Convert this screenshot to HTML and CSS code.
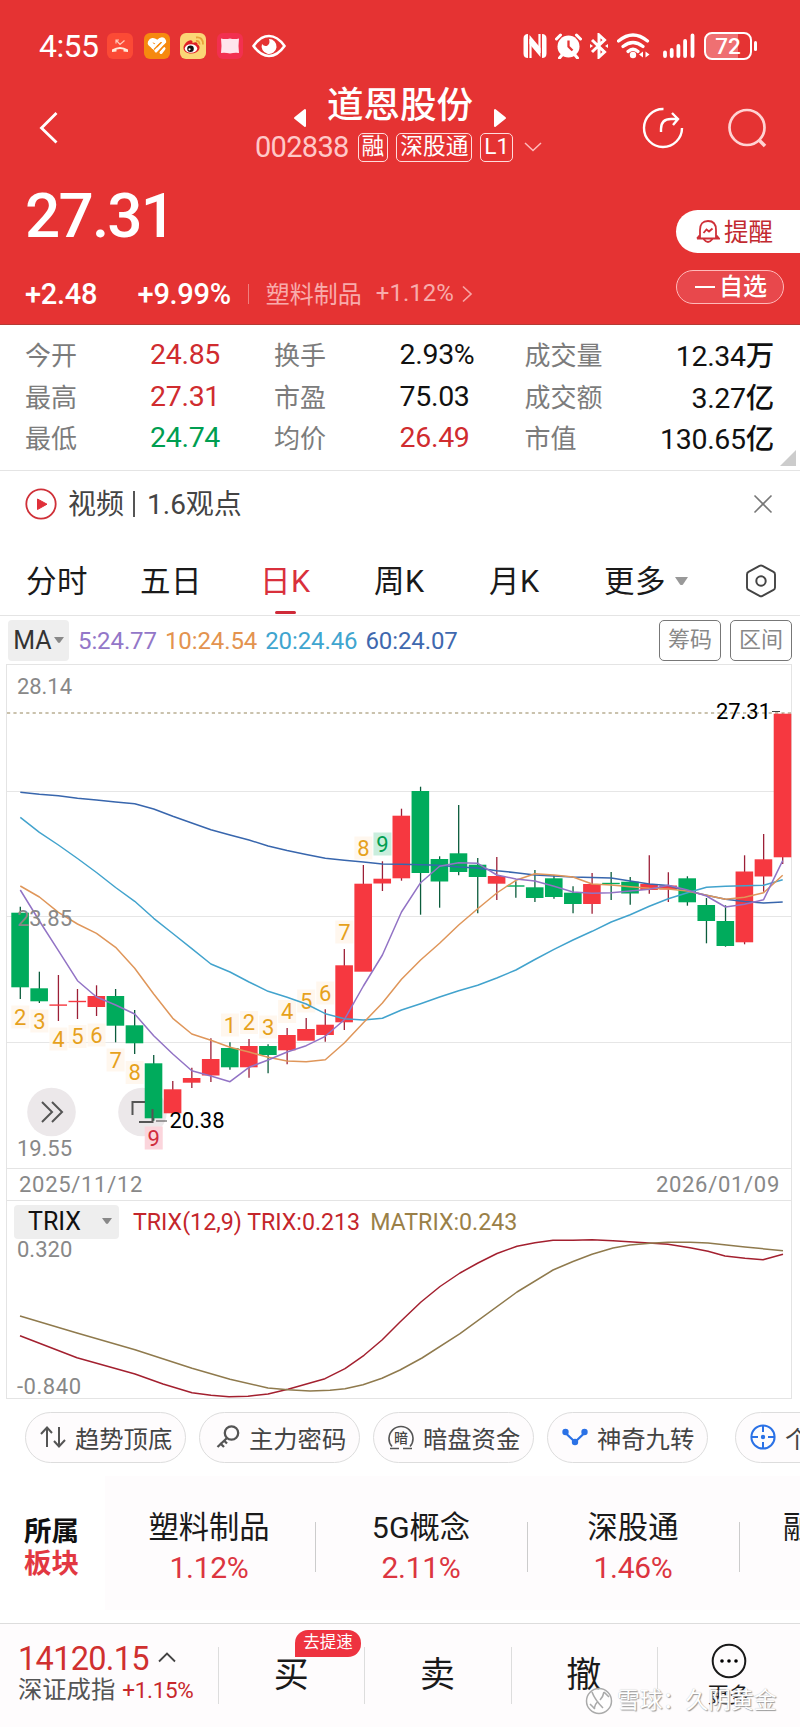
FILE: index.html
```
<!DOCTYPE html>
<html lang="zh-CN">
<head>
	<meta charset="utf-8">
	<title>道恩股份 002838</title>
	<meta name="viewport" content="width=device-width, initial-scale=1">
	<link rel="stylesheet" href="styles.css">
</head>
<body>
	<header class="top">
		<div class="status">
			<span class="time">4:55</span>
			<div class="apps">
				<svg width="26" height="26" viewBox="0 0 26 26"><rect width="26" height="26" rx="6" fill="#fb4a35"/><path d="M5 19v-2.500q8-5 16 0V19l-4.500-.5v-2q-3.500-1-7 0v2z" fill="#ffe9d8"/><path d="M9.500 7.500l3.500 4 4.500-4M9 10.500V7h3" fill="none" stroke="#ffc9b8" stroke-width="1.200"/></svg>
				<svg width="26" height="26" viewBox="0 0 26 26"><rect width="26" height="26" rx="6" fill="#f6890f"/><path d="M6 10.500l5.500 5M6 9.500q2-4 6-1M14.500 8.500q4-4 5.500 0" fill="none" stroke="#fff" stroke-width="4.500" stroke-linecap="round"/><path d="M9 14.500l7-6.500M12 18l8-8.500M17 19.500l3-4" stroke="#fff" stroke-width="3" stroke-linecap="round"/><path d="M10 16.500l7-7M14 19.500l6.500-7" stroke="#f6890f" stroke-width="1.200"/></svg>
				<svg width="26" height="26" viewBox="0 0 26 26"><rect width="26" height="26" rx="6" fill="#fbd676"/><path d="M3.500 15c0-4 5-8.500 8-7.500 1.500.5 1 2 1 2.500 3-1.500 5.500-1 5 1.500 4 1.500 2.500 9-6.500 9-4.500 0-7.500-2.500-7.500-5.500z" fill="#df1f26"/><ellipse cx="11" cy="15.500" rx="6.200" ry="4.300" fill="#fff"/><circle cx="10.500" cy="15.700" r="3.300" fill="#111"/><circle cx="9.500" cy="16.300" r="1.100" fill="#fff"/><path d="M16 4.500q7-1 7 7M16 8q3.500-.5 3.500 3.500" fill="none" stroke="#e9a03a" stroke-width="1.800"/></svg>
				<svg width="26" height="26" viewBox="0 0 26 26"><rect width="26" height="26" rx="6" fill="#f2304f"/><path d="M4 5.500q4.500 1 9 0 4.500 1 9 0l-.5 7.500.5 7q-4.500-.5-9 .5-4.500-1-9-.5l.5-7z" fill="#ffe5ec"/></svg>
				<svg class="eye" width="34" height="24" viewBox="0 0 34 24"><path d="M1.500 12Q8.500 2 17 2t15.500 10Q25.500 22 17 22T1.500 12z" fill="none" stroke="#fff" stroke-width="2.600"/><path d="M17 5a7.500 7.500 0 1 1-7 5q2.500 3 5.500 1.500Q18.500 9.500 17 5z" fill="#fff"/></svg>
			</div>
			<div class="signals">
				<svg width="24" height="26" viewBox="0 0 24 26"><path d="M5 1Q.5 1 .5 5.500v15Q.5 25 5 25zM19 1q4.500 0 4.500 4.500v15Q23.500 25 19 25z" fill="#fff"/><path d="M7.500 25V6M16.500 1v19" stroke="#fff" stroke-width="2.200"/><path d="M6.500 2l11 13v9L6.500 11z" fill="#fff"/></svg>
				<svg width="27" height="26" viewBox="0 0 27 26"><circle cx="13.500" cy="13.500" r="11" fill="#fff"/><path d="M1.500 6l4-4M25.500 6l-4-4M7 22l-2.500 3M20 22l2.500 3" stroke="#fff" stroke-width="3" stroke-linecap="round"/><path d="M13.500 7.500v6l4 4" fill="none" stroke="#e53333" stroke-width="2.300"/></svg>
				<svg width="18" height="26" viewBox="0 0 18 26"><path d="M2 7l12.500 12-5.500 5V2l5.500 5L2 19" fill="none" stroke="#fff" stroke-width="3"/><path d="M0 11l3 2-3 2zM18 11l-3 2 3 2z" fill="#fff"/></svg>
				<svg width="34" height="26" viewBox="0 0 34 26"><path d="M1.500 8q14.500-12 29 0M6 13.500q10-8 20 0M11 18.500q5-4.500 10 0" fill="none" stroke="#fff" stroke-width="3.200" stroke-linecap="round"/><circle cx="16" cy="22" r="3.200" fill="#fff"/><path d="M22 21.500l4-3v6zM32.500 21.500l-4-3v6z" fill="#fff"/></svg>
				<svg class="bars" width="32" height="26" viewBox="0 0 32 26"><path d="M2 19.500V23M8.700 17v6M15.400 13v10M22.100 8v15M29.500 2.500V23" stroke="#fff" stroke-width="3.800" stroke-linecap="round"/></svg>
				<span class="battery">72</span>
			</div>
		</div>

		<div class="titlebar">
			<svg class="back" width="20" height="34" viewBox="0 0 20 34"><path d="M17.500 2L2.500 17l15 14.500" fill="none" stroke="#fff" stroke-width="2.800"/></svg>
			<div class="stock">
				<div class="stock-name">
					<svg width="14" height="20" viewBox="0 0 14 20"><path d="M12 2v16L2 10z" fill="#fff" stroke="#fff" stroke-width="2" stroke-linejoin="round"/></svg>
					<h1>道恩股份</h1>
					<svg width="14" height="20" viewBox="0 0 14 20"><path d="M2 2v16l10-8z" fill="#fff" stroke="#fff" stroke-width="2" stroke-linejoin="round"/></svg>
				</div>
				<div class="stock-code">
					<span class="code">002838</span>
					<span class="tag">融</span>
					<span class="tag">深股通</span>
					<span class="tag">L1</span>
					<svg width="18" height="10" viewBox="0 0 18 10"><path d="M1 1l8 7.500L17 1" fill="none" stroke="#fbb" stroke-width="1.500"/></svg>
				</div>
			</div>
			<svg class="share" width="42" height="42" viewBox="0 0 42 42"><path d="M21.500 2A19 19 0 1 0 40 21" fill="none" stroke="#fff" stroke-width="2.400"/><path d="M19 25v-3q0-10 10-10h6M30 6l6 6-5 6" fill="none" stroke="#fff" stroke-width="2.400"/></svg>
			<svg width="40" height="40" viewBox="0 0 40 40"><circle cx="20" cy="19.500" r="17.500" fill="none" stroke="#ffd3d3" stroke-width="2.700"/><path d="M31.500 31.500l6.500 6.500" stroke="#ffd3d3" stroke-width="3.500"/></svg>
		</div>

		<div class="price">
			<div>
				<div class="last">27.31</div>
				<div class="change">
					<b>+2.48</b>
					<b>+9.99%</b>
					<i></i>
					<span>塑料制品</span>
					<em>+1.12%</em>
					<svg width="11" height="18" viewBox="0 0 11 18"><path d="M1 1.500L9 9l-8 7.500" fill="none" stroke="#f8a5a5" stroke-width="1.700"/></svg>
				</div>
			</div>
			<div class="actions">
				<a class="remind">
					<svg width="24" height="25" viewBox="0 0 24 25"><path d="M4 19V11q0-9 8-9t8 9v8M1 19.500h22l-2.500-3M1 19.500l2.500-3M7.500 20q4.500 6 9 0M7.500 14l3-3.500 2.500 2 3.500-3" fill="none" stroke="#cf3038" stroke-width="1.800"/></svg>
					<span>提醒</span>
				</a>
				<a class="watch"><i></i>自选</a>
			</div>
		</div>
	</header>

	<section class="quotes">
		<span>今开</span><b class="up">24.85</b><span>换手</span><b>2.93%</b><span>成交量</span><b>12.34万</b>
		<span>最高</span><b class="up">27.31</b><span>市盈</span><b>75.03</b><span>成交额</span><b>3.27亿</b>
		<span>最低</span><b class="down">24.74</b><span>均价</span><b class="up">26.49</b><span>市值</span><b>130.65亿</b>
	</section>

	<section class="video">
		<svg width="32" height="32" viewBox="0 0 32 32"><circle cx="16" cy="16" r="14.700" fill="none" stroke="#cf3038" stroke-width="1.800"/><path d="M12.500 11v10.500L22 16.200z" fill="#e0303a" stroke="#e0303a" stroke-linejoin="round"/></svg>
		<p>视频<i></i>1.6观点</p>
		<svg width="20" height="20" viewBox="0 0 20 20"><path d="M1.500 1.500l17 17M18.500 1.500l-17 17" stroke="#777" stroke-width="1.600"/></svg>
	</section>

	<nav class="tabs">
		<a>分时</a>
		<a>五日</a>
		<a class="active">日K</a>
		<a>周K</a>
		<a>月K</a>
		<a>更多<svg width="15" height="10" viewBox="0 0 15 10"><path d="M1 1h13L9 8.500q-1.500 1-3 0z" fill="#999"/></svg></a>
		<svg width="32" height="34" viewBox="0 0 32 34"><path d="M14.500 1.900q1.500-.8 3 0l11 6q1.500.8 1.500 2.500v13q0 1.700-1.500 2.500l-11 6q-1.500.8-3 0l-11-6Q2 25.100 2 23.400v-13q0-1.700 1.500-2.500z" fill="none" stroke="#444" stroke-width="1.900"/><circle cx="16" cy="17" r="4.700" fill="none" stroke="#444" stroke-width="2"/></svg>
	</nav>

	<section class="ma">
		<a class="ma-select">MA<svg width="10" height="7" viewBox="0 0 10 7"><path d="M0 0h10L6 5.500q-1 .8-2 0z" fill="#888"/></svg></a>
		<span class="ma5">5:24.77</span>
		<span class="ma10">10:24.54</span>
		<span class="ma20">20:24.46</span>
		<span class="ma60">60:24.07</span>
		<a class="outline">筹码</a>
		<a class="outline">区间</a>
	</section>

	<section class="chart">
		<svg id="kline" width="784" height="503" viewBox="7 665 784 503"></svg>
		<div class="dates"><span>2025/11/12</span><span>2026/01/09</span></div>
		<div class="trix-head">
			<a>TRIX<svg width="10" height="7" viewBox="0 0 10 7"><path d="M0 0h10L6 5.500q-1 .8-2 0z" fill="#888"/></svg></a>
			<span class="trix">TRIX(12,9) TRIX:0.213</span>
			<span class="matrix">MATRIX:0.243</span>
		</div>
		<svg id="trix" width="784" height="157" viewBox="7 1241 784 157"></svg>
	</section>

	<section class="chips">
		<a><svg width="26" height="22" viewBox="0 0 26 22"><path d="M7 21V2M1 8l6-6.500L12 7M19 1v19M14 15l5 5.500 6-6.500" fill="none" stroke="#555" stroke-width="2"/></svg>趋势顶底</a>
		<a><svg width="24" height="24" viewBox="0 0 24 24"><circle cx="15.500" cy="8" r="6.700" fill="none" stroke="#555" stroke-width="2.300"/><path d="M11 13L1.500 22M4 18l4 4M8 15.500l3 3" fill="none" stroke="#555" stroke-width="2.300"/></svg>主力密码</a>
		<a><svg width="26" height="26" viewBox="0 0 26 26"><path d="M4 22.500A12 12 0 1 1 22 22.500M2 24.500h9M15 24.500h9" fill="none" stroke="#555" stroke-width="1.600"/><text x="13" y="18.500" text-anchor="middle" font-size="14" font-weight="500" fill="#444">暗</text></svg>暗盘资金</a>
		<a><svg width="26" height="18" viewBox="0 0 26 18"><path d="M3.500 5L13 14l9.500-9" fill="none" stroke="#2b72e6" stroke-width="2.300"/><circle cx="3.500" cy="4" r="3.200" fill="#2b72e6"/><circle cx="22.500" cy="4" r="3.200" fill="#2b72e6"/><circle cx="13" cy="14" r="3.200" fill="#2b72e6"/></svg>神奇九转</a>
		<i></i>
		<a><svg width="26" height="26" viewBox="0 0 26 26"><circle cx="13" cy="13" r="11.600" fill="none" stroke="#2b72e6" stroke-width="2"/><path d="M13 1v7M13 18v7M1 13h7M18 13h7" stroke="#2b72e6" stroke-width="2"/><circle cx="13" cy="13" r="2.200" fill="#2b72e6"/></svg>个</a>
	</section>

	<section class="sectors">
		<h2>所属<span>板块</span></h2>
		<div class="sector-list">
			<div>塑料制品<b>1.12%</b></div>
			<div>5G概念<b>2.11%</b></div>
			<div>深股通<b>1.46%</b></div>
			<div class="next">融</div>
		</div>
	</section>

	<footer class="bottom">
		<div class="index">
			<p class="index-value">14120.15<svg width="20" height="12" viewBox="0 0 20 12"><path d="M2 10.500l8-8 8 8" fill="none" stroke="#444" stroke-width="1.800"/></svg></p>
			<p class="index-name">深证成指<b>+1.15%</b></p>
		</div>
		<a>买<span class="badge">去提速</span></a>
		<a>卖</a>
		<a>撤</a>
		<a class="more">
			<svg width="36" height="36" viewBox="0 0 36 36"><circle cx="18" cy="18" r="16.300" fill="none" stroke="#1a1a1a" stroke-width="2"/><circle cx="11" cy="18" r="1.800"/><circle cx="18" cy="18" r="1.800"/><circle cx="25" cy="18" r="1.800"/></svg>
			更多
		</a>
		<div class="watermark"><svg width="28" height="28" viewBox="0 0 28 28"><circle cx="14" cy="14" r="12.500" fill="#fff" fill-opacity=".6" stroke="#aaa" stroke-width="1.500"/><path d="M7 5q3 8 11 16M19 5q-1 5-4 8M9 22q1-5 4-8M19 5l5 5M5 17l5 5" fill="none" stroke="#aaa" stroke-width="1.600"/></svg>雪球：久阴黄金</div>
	</footer>

	<script src="chart.js"></script>
</body>
</html>
```
FILE: styles.css
```
* {
	box-sizing: border-box;
}
body {
	margin: 0;
	width: 800px;
	height: 1727px;
	overflow: hidden;
	background: #fff;
	color: #1a1a1a;
	font-family: Roboto, "Noto Sans CJK SC", sans-serif;
}
h1, h2, p {
	margin: 0;
}
svg {
	display: block;
	flex: none;
}
b, i, em {
	font-weight: 400;
	font-style: normal;
}

/* red header */
.top {
	height: 325px;
	background: #e53333;
	border-bottom: 1px solid #b53a34;
	color: #fff;
	white-space: nowrap;
}
.status {
	height: 80px;
	padding: 12px 43px 0 39px;
	display: flex;
	align-items: center;
}
.time {
	width: 68px;
	font-size: 32px;
	letter-spacing: -0.6px;
}
.apps {
	display: flex;
	align-items: center;
	gap: 10.700px;
}
.eye {
	margin-left: -2px;
}
.signals {
	margin-left: auto;
	display: flex;
	align-items: center;
	gap: 8.200px;
}
.bars {
	margin-left: 4px;
}
.battery {
	position: relative;
	width: 48px;
	height: 28px;
	margin: 0 5px 0 1px;
	border: 2px solid #fff;
	border-radius: 8px;
	background: linear-gradient(90deg, #ef7072 72%, #e53333 72%);
	font-size: 22.500px;
	font-weight: 500;
	line-height: 25px;
	text-align: center;
}
.battery::after {
	content: "";
	position: absolute;
	right: -7px;
	top: 7px;
	width: 3px;
	height: 10px;
	border-radius: 2px;
	background: #fff;
}
.titlebar {
	height: 96px;
	padding: 0 33px 0 39px;
	display: flex;
	align-items: center;
}
.stock {
	flex: none;
	width: 290px;
	margin: -8px 97px 0 196px;
}
.stock-name {
	height: 44px;
	padding-left: 38px;
	display: flex;
	align-items: center;
	gap: 20px;
}
.stock-name svg {
	margin-top: 23px;
}
.stock-name h1 {
	font-size: 36.500px;
	font-weight: 500;
	line-height: 44px;
}
.stock-code {
	height: 34px;
	margin-top: 2px;
	display: flex;
	align-items: center;
	gap: 8px;
}
.code {
	margin-right: 1px;
	color: #ffc8c8;
	font-size: 29px;
	letter-spacing: -0.7px;
}
.tag {
	height: 29px;
	padding: 0 3px;
	border: 1.300px solid #ffdcdc;
	border-radius: 5px;
	font-size: 22.700px;
	line-height: 25px;
}
.stock-code svg {
	margin-left: 3px;
}
.share {
	margin-right: 43px;
}
.price {
	display: flex;
	justify-content: space-between;
	padding-left: 25px;
}
.last {
	height: 80px;
	font-size: 62px;
	font-weight: 500;
	line-height: 80px;
	letter-spacing: -1.800px;
}
.change {
	height: 32px;
	margin-top: 22px;
	display: flex;
	align-items: center;
	color: #f8abab;
	font-size: 24px;
}
.change b {
	color: #fff;
	font-size: 29px;
	font-weight: 500;
	letter-spacing: -0.3px;
	margin-right: 40.500px;
}
.change b + b {
	margin-right: 0;
}
.change i {
	width: 1px;
	height: 20px;
	margin: 0 17px;
	background: #f07f7f;
}
.change span {
	margin-top: -4px;
}
.change em {
	margin: -2px 8px 0 14px;
}
.actions {
	padding-top: 34px;
}
.remind {
	width: 124px;
	height: 43px;
	padding-left: 20px;
	display: flex;
	align-items: center;
	gap: 4px;
	border-radius: 22px 0 0 22px;
	background: #fff;
	color: #c22a30;
	font-size: 24.500px;
}
.remind span {
	margin-top: -2px;
}
.watch {
	width: 108px;
	height: 34px;
	margin-top: 17px;
	padding-left: 18px;
	display: flex;
	align-items: center;
	gap: 4px;
	border: 1px solid #ffb9b9;
	border-radius: 17px;
	background: #e8484c;
	font-size: 24px;
	font-weight: 500;
	line-height: 30px;
}
.watch i {
	width: 20px;
	height: 2px;
	background: #fff;
}

/* quotes */
.quotes {
	position: relative;
	height: 146px;
	padding: 9px 26px 0 25px;
	display: grid;
	grid-template-columns: 125px 124px 125.500px 125px 95px 1fr;
	grid-auto-rows: 41.600px;
	align-items: center;
	border-bottom: 1px solid #e4e4e4;
	color: #7c7c7c;
	font-size: 26px;
}
.quotes span {
	margin-top: -2px;
}
.quotes b {
	color: #111;
	font-size: 28.500px;
	font-weight: 450;
	letter-spacing: -0.3px;
	white-space: nowrap;
}
.quotes b:nth-child(6n) {
	margin-top: -2px;
	text-align: right;
}
.quotes .up {
	color: #d02c2f;
}
.quotes .down {
	color: #009e51;
}
.quotes::after {
	content: "";
	position: absolute;
	right: 4px;
	bottom: 4px;
	border: 8px solid;
	border-color: transparent #ccc #ccc transparent;
}

.video {
	height: 66px;
	padding: 0 27px 0 25px;
	display: flex;
	align-items: center;
}
.video p {
	flex: 1;
	margin: -4px 0 0 11px;
	color: #444;
	font-size: 28px;
}
.video i {
	display: inline-block;
	width: 2px;
	height: 26px;
	margin: 0 12px 0 9px;
	background: #555;
	vertical-align: -3px;
}

/* period tabs */
.tabs {
	height: 79px;
	padding: 9px 23px 0 26px;
	display: grid;
	grid-template-columns: 114px 120px 114px 115px 115px 141px 32px;
	align-items: center;
	border-bottom: 1px solid #e4e4e4;
	font-size: 30.500px;
	letter-spacing: 0.5px;
}
.tabs a {
	position: relative;
	top: -2px;
	display: flex;
	align-items: center;
	gap: 8px;
}
.tabs a svg {
	margin-top: 5px;
}
.tabs .active {
	color: #d9303c;
}
.tabs .active::after {
	content: "";
	position: absolute;
	left: 15px;
	bottom: -13px;
	width: 21px;
	height: 3px;
	border-radius: 2px;
	background: #cf2a38;
}

/* MA legend */
.ma {
	height: 48px;
	padding: 0 8px;
	display: flex;
	align-items: center;
	font-size: 24px;
}
.ma span {
	margin: 2px 8px 0 0;
	letter-spacing: -0.1px;
}
.ma-select {
	width: 61px;
	height: 41px;
	margin-right: 9px;
	display: flex;
	align-items: center;
	justify-content: center;
	gap: 2px;
	border-radius: 4px;
	background: #eee;
	color: #333;
	font-size: 25px;
}
.ma5 { color: #9377c8; }
.ma10 { color: #e3934f; }
.ma20 { color: #3fa5cf; }
.ma60 { color: #3f68ae; }
.outline {
	width: 62px;
	height: 41px;
	margin-left: 9px;
	border: 1px solid #777;
	border-radius: 5px;
	color: #888;
	font-size: 22px;
	line-height: 38px;
	text-align: center;
}
.ma60 + .outline {
	margin-left: auto;
}

/* chart */
.chart {
	width: 786px;
	height: 735px;
	margin-left: 6px;
	border: 1px solid #e4e4e4;
}
.chart svg {
	overflow: visible;
}
.dates {
	height: 33px;
	padding: 0 11px 0 12px;
	display: flex;
	justify-content: space-between;
	align-items: center;
	border: solid #e4e4e4;
	border-width: 1px 0;
	color: #888;
	font-size: 22px;
	letter-spacing: 0.7px;
}
.trix-head {
	height: 40px;
	padding: 1px 0 0 7px;
	display: flex;
	align-items: center;
	font-size: 23.200px;
}
.trix-head a {
	width: 105px;
	height: 34px;
	margin-right: 14px;
	padding: 0 7px 0 14px;
	display: flex;
	align-items: center;
	justify-content: space-between;
	border-radius: 4px;
	background: #eee;
	color: #111;
	font-size: 25px;
}
.trix-head span {
	padding-top: 1px;
}
.trix {
	margin-right: 10px;
	color: #c4252b;
}
.matrix {
	color: #9a8048;
}
.axis {
	fill: #888;
	font-size: 22px;
}
.mark {
	fill: #000;
	font-size: 22px;
}
.turn {
	fill: #e6a11c;
	font-size: 22px;
	text-anchor: middle;
}
.line {
	fill: none;
	stroke-width: 1.500;
	stroke-linejoin: round;
}

/* indicator chips */
.chips {
	height: 64px;
	padding: 13px 0 0 25px;
	display: flex;
	align-items: flex-start;
	gap: 13px;
	overflow: hidden;
}
.chips a {
	flex: none;
	width: 161px;
	height: 51px;
	padding: 0 0 1px 14px;
	display: flex;
	align-items: center;
	gap: 9px;
	border: 1px solid #ddd;
	border-radius: 26px;
	background: #fefcfd;
	color: #444;
	font-size: 24.300px;
	white-space: nowrap;
}
.chips a:nth-child(2) {
	padding-left: 16px;
}
.chips i {
	width: 1px;
	height: 33px;
	margin-top: 8px;
	background: #ddd;
}
.chips i + a {
	margin-left: 1px;
}

/* sectors */
.sectors {
	height: 160px;
	display: flex;
	align-items: center;
	overflow: hidden;
}
.sectors h2 {
	width: 105px;
	padding: 9px 0 0 24px;
	flex: none;
	font-size: 27.500px;
	font-weight: 700;
	line-height: 32px;
	color: #111;
}
.sectors h2 span {
	display: block;
	color: #e23842;
}
.sector-list {
	height: 134px;
	display: flex;
	flex: none;
	background: #fefcfd;
}
.sector-list div {
	position: relative;
	width: 212px;
	padding: 30px 4px 0 0;
	font-size: 30.300px;
	line-height: 44px;
	text-align: center;
}
.sector-list div::after {
	content: "";
	position: absolute;
	right: 1px;
	top: 46px;
	width: 1px;
	height: 50px;
	background: #ccc;
}
.sector-list .next {
	padding-left: 42px;
	text-align: left;
}
.sector-list b {
	display: block;
	margin-top: -1px;
	color: #dc3540;
	font-size: 30px;
	font-weight: 450;
	line-height: 38px;
	letter-spacing: -0.3px;
}

/* bottom bar */
.bottom {
	position: relative;
	height: 104px;
	display: flex;
	border-top: 1px solid #ddd;
	background: #fefcfd;
}
.index {
	flex: none;
	width: 218px;
	padding: 14px 0 0 18px;
	white-space: nowrap;
}
.index-value {
	display: flex;
	align-items: center;
	gap: 8px;
	color: #d0302f;
	font-size: 32.500px;
	line-height: 42px;
	letter-spacing: -0.7px;
}
.index-value svg {
	margin-top: -5px;
}
.index-name {
	margin-top: -1px;
	color: #555;
	font-size: 24.300px;
	line-height: 22px;
}
.index-name b {
	margin-left: 7px;
	color: #c8282c;
	font-size: 22.500px;
	letter-spacing: -0.3px;
}
.bottom a {
	flex: none;
	position: relative;
	width: 146.300px;
	font-size: 35px;
	line-height: 103px;
	text-align: center;
}
.bottom a::before {
	content: "";
	position: absolute;
	left: 0;
	top: 23px;
	width: 1px;
	height: 57px;
	background: #ddd;
}
.bottom .badge {
	position: absolute;
	left: 77px;
	top: 6px;
	width: 66px;
	height: 27px;
	border-radius: 13px 13px 13px 0;
	background: #ee3340;
	color: #fff;
	font-size: 16.500px;
	line-height: 25px;
}
.bottom .more {
	width: 143.500px;
	padding-top: 19px;
	display: flex;
	flex-direction: column;
	align-items: center;
	font-size: 21px;
	line-height: 32px;
}
.watermark {
	position: absolute;
	left: 585px;
	top: 62px;
	display: flex;
	align-items: center;
	gap: 4px;
	color: #fff;
	font-size: 22.800px;
	line-height: 30px;
	white-space: nowrap;
	text-shadow: 1px 1px 1px #999, 0 0 1px #bbb;
}
```
FILE: chart.js
```
const STEP = 19.06;
const RED = '#f63840';
const GREEN = '#00ab5c';

// direction, body top, body bottom, high, low
const CANDLES = [
	['g', 912.7, 987.3, 906.7, 999],
	['g', 988.3, 1001.3, 971.7, 1003],
	['r', 1004.4, 1005.8, 975, 1021],
	['r', 1000.8, 1002.2, 989, 1019],
	['r', 996, 1007, 985.3, 1016],
	['g', 996, 1025.7, 989, 1042.3],
	['g', 1025.3, 1043.3, 1010, 1054],
	['g', 1063.3, 1118.3, 1055, 1120.7],
	['r', 1089.3, 1113.3, 1081, 1113],
	['r', 1078, 1082.7, 1067.7, 1088],
	['r', 1059, 1075.5, 1038.3, 1082],
	['g', 1048, 1067.3, 1042.3, 1069.7],
	['r', 1046, 1067.3, 1039, 1077.7],
	['g', 1046, 1055, 1044.3, 1073.3],
	['r', 1035, 1050.3, 1028, 1064.3],
	['r', 1029, 1040.7, 1018, 1040],
	['r', 1024.7, 1035, 1009.3, 1041.7],
	['r', 965.3, 1022.3, 949, 1030],
	['r', 883.7, 971.7, 865, 971],
	['r', 878.7, 883.5, 861.3, 891],
	['r', 815.7, 878.3, 808.7, 880.7],
	['g', 791, 873, 786.7, 914.7],
	['g', 859, 881.5, 856.3, 907.7],
	['g', 853.3, 872, 805, 875.3],
	['g', 864.7, 877, 858, 913.3],
	['r', 876, 883.7, 857, 900],
	['g', 885.3, 886.7, 881.3, 897.7],
	['g', 887.3, 898, 870, 902],
	['g', 878.3, 897, 875, 898.7],
	['g', 892.7, 904, 886.3, 913.3],
	['r', 884, 904, 873, 913.7],
	['g', 882.8, 884.2, 872, 900],
	['g', 881.7, 893.5, 877, 904.7],
	['r', 884, 890, 855.3, 893.7],
	['r', 885.5, 889.5, 872.3, 902],
	['g', 878.3, 902.3, 876.3, 905.7],
	['g', 905, 921, 898, 943.3],
	['g', 921, 946, 905.3, 946.7],
	['r', 871.5, 942.3, 855.3, 944.3],
	['r', 859.3, 876.5, 834, 891.7],
	['r', 713.7, 857.3, 713.7, 864]
];

const MA5 = [890, 921, 950.7, 980.7, 997, 1005, 1014, 1035.7, 1054, 1070.7, 1076, 1081.7, 1067.3, 1060, 1052, 1045.7, 1036.3, 1019.7, 986, 955, 912, 882.7, 866.3, 862.7, 863.3, 875, 879, 881, 886.3, 892, 893.3, 892.7, 891, 889.3, 885.3, 890, 896, 907, 904.3, 899.7, 860.7];
const MA10 = [886, 897, 912.3, 924, 933.3, 947.3, 968.3, 994, 1018.3, 1034, 1040.3, 1047.3, 1052, 1057.3, 1061, 1061.7, 1059.7, 1043, 1022.7, 1003, 979.3, 960, 943.3, 925, 908.7, 893, 880.3, 873.7, 875, 877, 884, 885, 886.7, 888.3, 889, 891, 895.3, 899.3, 897.3, 892.7, 875.3];
const MA20 = [817.3, 832.3, 845, 858.5, 872.5, 887.5, 901.3, 918.3, 933.5, 948.7, 964, 972, 982, 991.3, 997.3, 1004, 1013.7, 1018.7, 1020, 1018.3, 1010, 1003.7, 997, 990.7, 985.3, 978, 970, 959.5, 949.3, 940, 931.3, 922, 914.7, 906.3, 898.7, 892.7, 887.3, 886.3, 885.7, 885.3, 879.7];
const MA60 = [792.3, 794.3, 795.7, 798.2, 800, 802, 803.7, 809, 816.3, 823, 829.7, 835, 840, 846, 850.5, 854.5, 858.3, 860.3, 862, 864, 864.3, 864.8, 865.3, 867, 868, 870.7, 872.7, 875, 876, 877, 877.5, 878, 881, 884, 885.5, 891, 895.3, 899.3, 901.5, 903, 902];

// candle index, digit, vertical centre
const TURNS = [
	[0, 2, 1017], [1, 3, 1021], [2, 4, 1039], [3, 5, 1036.5], [4, 6, 1035], [5, 7, 1060], [6, 8, 1072.5], [7, 9, 1138, '#fbd5dc', '#d02c3c'],
	[11, 1, 1025], [12, 2, 1022.5], [13, 3, 1027], [14, 4, 1011.5], [15, 5, 1001], [16, 6, 993], [17, 7, 932], [18, 8, 848], [19, 9, 844, '#c9eedd', '#009e51']
];

const TRIX = '20,1335.7 77,1357.7 135,1374 163,1384 192,1392.7 211,1395.3 229,1396.7 248,1396.2 268,1394 288,1389.3 325,1378.7 345,1368.7 364,1355.3 382,1340 400,1322 421,1302 440,1286.5 460,1273 478,1263 497,1253.5 517,1246.3 535,1242.8 553,1240.3 573,1240.3 592,1239.7 613,1240.7 645,1242.7 668,1244.3 690,1247.7 708,1251.3 725,1256 745,1258.3 763,1259.7 783,1254.3';
const MATRIX = '20,1316 77,1333 135,1349.7 192,1368.3 230,1379.3 268,1388 288,1389.7 310,1391 330,1390.3 345,1388.7 363,1384.7 382,1378.3 400,1370 422,1358 460,1333.7 517,1292 553,1270 573,1261.5 592,1254.3 613,1248 630,1245 650,1243.3 668,1242.3 690,1242.3 708,1243 745,1247 783,1250.7';

const x = (i) => 20.3 + i * STEP;

function line(values, color) {
	const points = typeof values === 'string' ? values : values.map((y, i) => `${x(i).toFixed(1)},${y}`).join(' ');
	return `<polyline class="line" stroke="${color}" points="${points}"/>`;
}

function grid(y) {
	return `<path d="M7 ${y}H791" stroke="#e6e6e6"/>`;
}

function drawKline() {
	let out = [791.5, 916.5, 1042.5].map(grid).join('');
	out += '<path d="M7 713H791" stroke="#b9ae93" stroke-width="1.500" stroke-dasharray="3.200 3.200"/>';

	// floating buttons sit under the candles
	out += '<circle cx="51.500" cy="1112" r="24.300" fill="#ece8ea"/><path d="M42 1102l10 10-10 10M52 1102l10 10-10 10" fill="none" stroke="#555" stroke-width="2"/>';
	out += '<circle cx="142.500" cy="1112" r="24.300" fill="#ece8ea"/>';

	CANDLES.forEach(([dir, top, bottom, high, low], i) => {
		const color = dir === 'r' ? RED : GREEN;
		const wick = dir === 'r' ? '#9c1f37' : '#0b5c3c';
		out += `<path d="M${x(i)} ${high}V${low}" stroke="${wick}" stroke-width="1.300"/>`;
		out += `<rect x="${x(i) - 9}" y="${top}" width="17.600" height="${bottom - top}" fill="${color}"/>`;
	});

	TURNS.forEach(([i, n, y, bg, color]) => {
		out += `<rect x="${x(i) - 9}" y="${y - 11.5}" width="18" height="23" fill="${bg || '#fff5ea'}" fill-opacity="${bg ? 1 : .8}"/>`;
		out += `<text class="turn" x="${x(i)}" y="${y + 7.5}"${color ? ` style="fill:${color}"` : ''}>${n}</text>`;
	});

	out += line(MA60, '#3866ad') + line(MA20, '#42a3cd') + line(MA10, '#df965a') + line(MA5, '#9273c5');
	out += '<path d="M132.500 1115v-13H145M139 1122h13.500v-13" fill="none" stroke="#555" stroke-width="2"/>';
	out += '<path d="M156 1121h11M772 711.500h8" stroke="#444"/>';
	out += '<text class="mark" x="169.500" y="1128" textLength="55">20.38</text><text class="mark" x="716" y="718.500" textLength="55">27.31</text>';
	out += '<text class="axis" x="17" y="693.500" textLength="55">28.14</text><text class="axis" x="17" y="926" textLength="55">23.85</text><text class="axis" x="17" y="1155.500" textLength="55">19.55</text>';
	document.getElementById('kline').innerHTML = out;
}

function drawTrix() {
	document.getElementById('trix').innerHTML = line(TRIX, '#a3202f') + line(MATRIX, '#8f7a4d')
		+ '<text class="axis" x="17" y="1257">0.320</text><text class="axis" x="17" y="1393.500" textLength="64">-0.840</text>';
}

drawKline();
drawTrix();
```
